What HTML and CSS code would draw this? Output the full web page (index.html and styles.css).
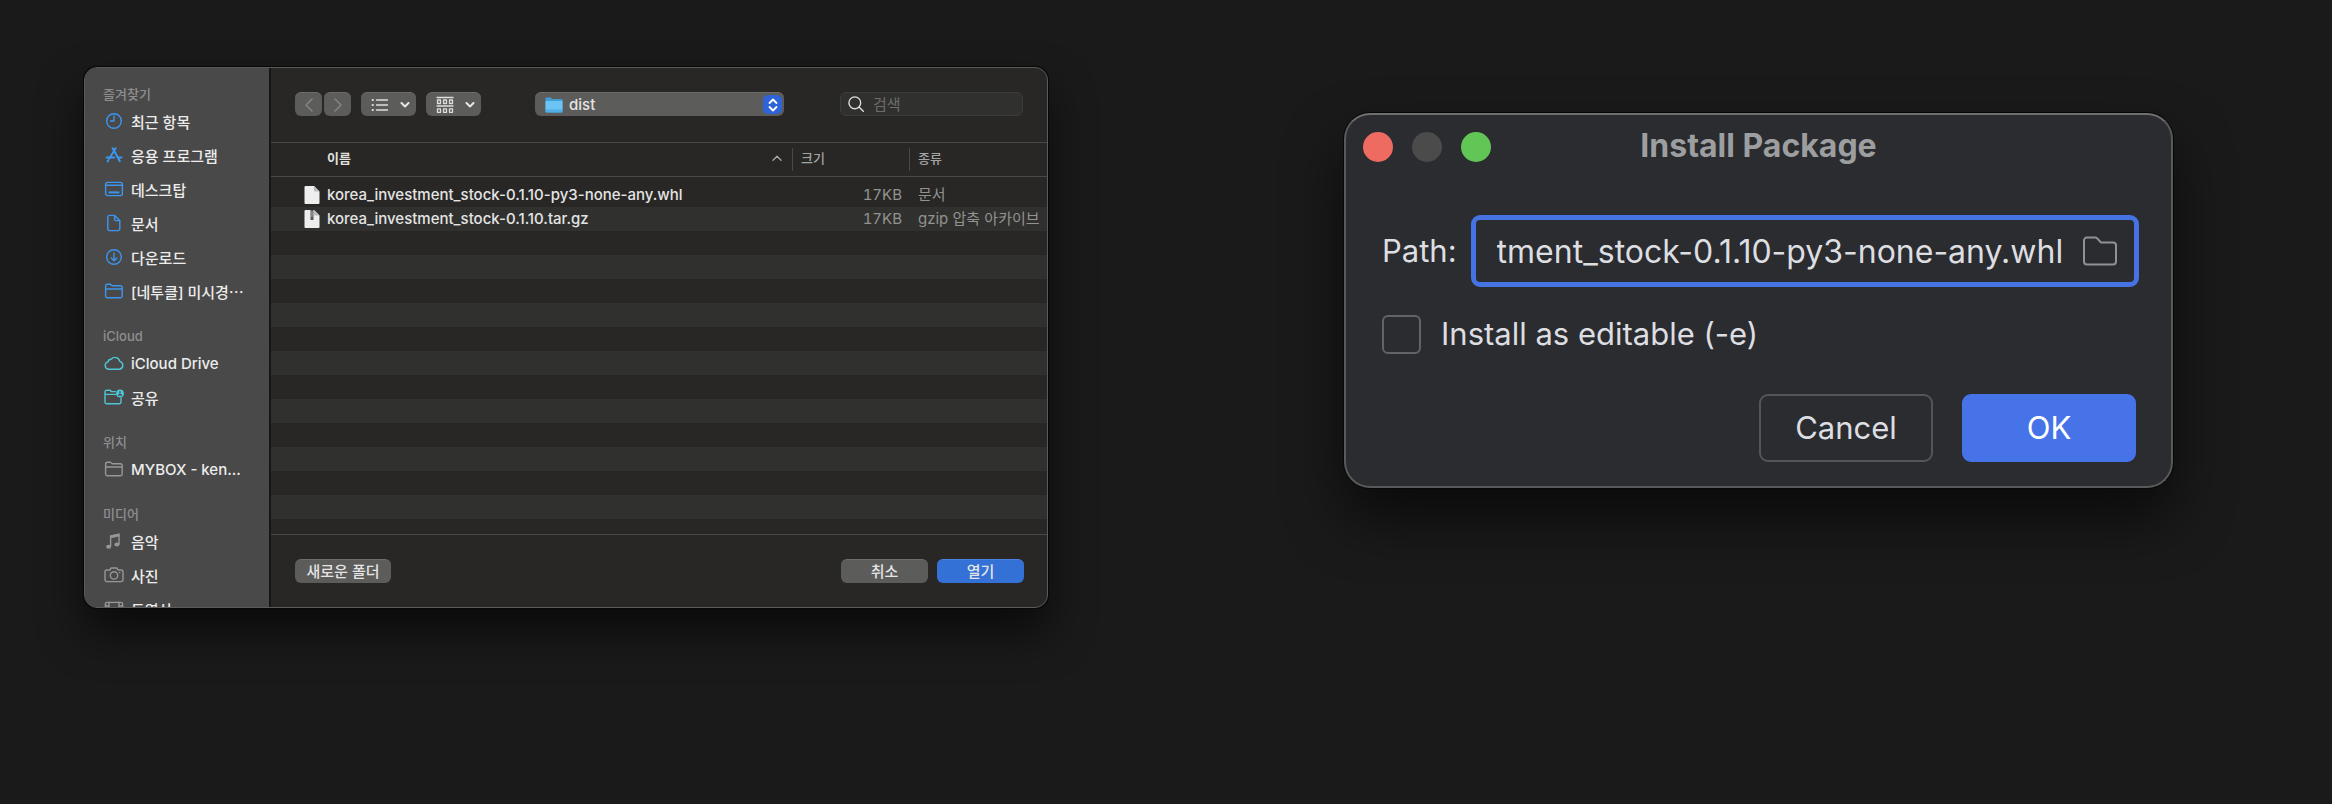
FILE: index.html
```html
<!DOCTYPE html>
<html lang="ko">
<head>
<meta charset="utf-8">
<title>Install Package</title>
<link rel="stylesheet" href="styles.css">
</head>
<body>
<main class="desktop">
  <section class="finder" aria-label="dist">
    <nav class="sidebar">
      <h2 class="side-title">즐겨찾기</h2>
      <ul class="side-list">
        <li><a class="side-item" href="#"><svg class="side-icon blue" viewBox="0 0 20 20"><circle cx="10" cy="10" r="7.3"/><path d="M10 5v5H6.4"/></svg>최근 항목</a></li>
        <li><a class="side-item" href="#"><svg class="side-icon blue thick" viewBox="0 0 20 20"><path d="M8.6 3.2 10 5.6M11.6 3.2 5.4 13.6M10 5.6l5.8 10.6M2.6 12.6h7.6M13.8 12.6h3.8M4.2 15.4l-.6 1"/></svg>응용 프로그램</a></li>
        <li><a class="side-item" href="#"><svg class="side-icon blue" viewBox="0 0 20 20"><rect x="1.6" y="3.4" width="16.8" height="13.2" rx="2"/><path d="M1.6 6.2h16.8"/><rect class="solid" x="4.6" y="12.4" width="10.8" height="2"/></svg>데스크탑</a></li>
        <li><a class="side-item" href="#"><svg class="side-icon blue" viewBox="0 0 20 20"><path d="M5.6 2.4h5l5.2 5.2v8.2a1.8 1.8 0 0 1-1.8 1.8H5.6a1.8 1.8 0 0 1-1.8-1.8V4.2a1.8 1.8 0 0 1 1.8-1.8zM10.6 2.6v3.6a1.4 1.4 0 0 0 1.4 1.4h3.8"/></svg>문서</a></li>
        <li><a class="side-item" href="#"><svg class="side-icon blue" viewBox="0 0 20 20"><circle cx="10" cy="10" r="7.3"/><path d="M10 6v7.6M7.2 11l2.8 2.8 2.8-2.8"/></svg>다운로드</a></li>
        <li><a class="side-item" href="#"><svg class="side-icon blue" viewBox="0 0 20 20"><path d="M1.6 15V5a1.8 1.8 0 0 1 1.8-1.8h3l1.8 1.6h8.2A1.8 1.8 0 0 1 18.2 6.6V15a1.8 1.8 0 0 1-1.8 1.8H3.4A1.8 1.8 0 0 1 1.6 15zM1.6 8h16.6"/></svg>[네투클] 미시경⋯</a></li>
      </ul>
      <h2 class="side-title">iCloud</h2>
      <ul class="side-list">
        <li><a class="side-item" href="#"><svg class="side-icon teal" viewBox="0 0 20 20"><path d="M4.6 16.2a3.7 3.7 0 0 1-.5-7.300 3 3 0 0 1 3-2.700 5 5 0 0 1 8.700 2.200 4 4 0 0 1-.2 7.800z"/></svg>iCloud Drive</a></li>
        <li><a class="side-item" href="#"><svg class="side-icon teal" viewBox="0 0 20 20"><path d="M11.4 4.6H7.6L6 3.2H2.8A1.8 1.8 0 0 0 1 5v10a1.8 1.8 0 0 0 1.8 1.8h12.4A1.8 1.8 0 0 0 17 15v-4M1 7.4h10.6"/><circle class="solid" cx="16" cy="6.4" r="3.900"/><path class="cut" d="M16 4.800v1M14.600 8.200q1.400-1.400 2.800 0"/></svg>공유</a></li>
      </ul>
      <h2 class="side-title">위치</h2>
      <ul class="side-list">
        <li><a class="side-item" href="#"><svg class="side-icon gray" viewBox="0 0 20 20"><path d="M1.6 15V5a1.8 1.8 0 0 1 1.8-1.8h3l1.8 1.6h8.2A1.8 1.8 0 0 1 18.2 6.6V15a1.8 1.8 0 0 1-1.8 1.8H3.4A1.8 1.8 0 0 1 1.6 15zM1.6 8h16.6"/></svg>MYBOX - ken...</a></li>
      </ul>
      <h2 class="side-title">미디어</h2>
      <ul class="side-list">
        <li><a class="side-item" href="#"><svg class="side-icon gray" viewBox="0 0 20 20"><path class="solid" d="M6 4.4 15.6 2.2v3L7.2 7.2H6z"/><path d="M6.600 5v10M15 4v9"/><ellipse class="solid" cx="4.600" cy="15.800" rx="2.500" ry="2"/><ellipse class="solid" cx="12.900" cy="13.600" rx="2.500" ry="2"/></svg>음악</a></li>
        <li><a class="side-item" href="#"><svg class="side-icon gray" viewBox="0 0 20 20"><path d="M2.800 5h3l1.400-2h5.600l1.400 2h3A1.800 1.800 0 0 1 19 6.800v8a1.800 1.800 0 0 1-1.800 1.800H2.800A1.800 1.800 0 0 1 1 14.800v-8A1.800 1.800 0 0 1 2.800 5z"/><circle cx="10" cy="10.400" r="3.700"/><circle class="solid" cx="15.800" cy="7.600" r=".8"/></svg>사진</a></li>
        <li><a class="side-item" href="#"><svg class="side-icon gray" viewBox="0 0 20 20"><rect x="1.400" y="3.400" width="17.200" height="13.200" rx="1.600"/><path d="M5 3.400v13.200M15 3.400v13.200M1.400 7H5M15 7h3.600M5 10h10"/></svg>동영상</a></li>
      </ul>
    </nav>

    <div class="browser">
      <header class="toolbar">
        <div class="nav-pair">
          <button class="mac-btn nav-btn" type="button" aria-label="뒤로"><svg class="chev" viewBox="0 0 10 14"><path d="M8 1 2 7l6 6"/></svg></button>
          <button class="mac-btn nav-btn" type="button" aria-label="앞으로"><svg class="chev" viewBox="0 0 10 14"><path d="m2 1 6 6-6 6"/></svg></button>
        </div>
        <button class="mac-btn view-btn" type="button" aria-label="목록 보기">
          <svg class="view-icon" viewBox="0 0 18 14"><path d="M5.500 2h11M5.500 7h11M5.500 12h11"/><path class="dots" d="M1.500 2h.5M1.500 7h.5M1.500 12h.5"/></svg>
          <svg class="caret" viewBox="0 0 10 6"><path d="m1.500 1 3.500 3.500L8.500 1"/></svg>
        </button>
        <button class="mac-btn view-btn" type="button" aria-label="그룹">
          <svg class="group-icon" viewBox="0 0 18 18"><path d="M1 1.500h16M1 10h16"/><g><rect x="1.500" y="4" width="3" height="3.500"/><rect x="7.500" y="4" width="3" height="3.500"/><rect x="13.500" y="4" width="3" height="3.500"/><rect x="1.500" y="12.800" width="3" height="3.500"/><rect x="7.500" y="12.800" width="3" height="3.500"/><rect x="13.500" y="12.800" width="3" height="3.500"/></g></svg>
          <svg class="caret" viewBox="0 0 10 6"><path d="m1.500 1 3.500 3.500L8.500 1"/></svg>
        </button>
        <div class="location">
          <svg class="loc-folder" viewBox="0 0 18 16"><path fill="#3f9fd6" d="M.5 1.500A1 1 0 0 1 1.500.5h4.300l1.400 1.500h9.300a1 1 0 0 1 1 1v11.500a1 1 0 0 1-1 1h-15a1 1 0 0 1-1-1z"/><path fill="#6cc4f5" d="M.5 4h17v8.800H.5z"/><path fill="#52aee6" d="M.5 12.800h17v1.700a1 1 0 0 1-1 1h-15a1 1 0 0 1-1-1z"/></svg>
          <select class="loc-select" aria-label="위치"><option>dist</option></select>
          <span class="stepper"><svg class="step-icon" viewBox="0 0 10 14"><path d="M1.500 5 5 1.500 8.500 5M1.500 9 5 12.500 8.500 9"/></svg></span>
        </div>
        <label class="search">
          <svg class="search-icon" viewBox="0 0 16 16"><circle cx="6.800" cy="6.800" r="5.900"/><path d="m11 11 4.300 4.300"/></svg>
          <input class="search-input" type="search" placeholder="검색" aria-label="검색">
        </label>
      </header>

      <div class="files">
        <table class="file-table">
          <colgroup><col><col class="col-size"><col class="col-kind"></colgroup>
          <thead>
            <tr>
              <th class="name-head" scope="col"><div class="head-cell">이름<svg class="sort" viewBox="0 0 10 6"><path d="M1 5.200 5 1.200l4 4"/></svg></div></th>
              <th scope="col"><div class="head-cell">크기</div></th>
              <th scope="col"><div class="head-cell">종류</div></th>
            </tr>
          </thead>
          <tbody>
            <tr>
              <td><div class="name-cell"><svg class="file-icon" viewBox="0 0 16 18"><path fill="#eee" d="M.5 1A1 1 0 0 1 1.500 0H10l5.500 5.500V17a1 1 0 0 1-1 1h-13a1 1 0 0 1-1-1z"/><path fill="#bcbcbc" d="M10 0v4.500a1 1 0 0 0 1 1h4.500z"/></svg>korea_investment_stock-0.1.10-py3-none-any.whl</div></td>
              <td class="size">17KB</td>
              <td class="kind">문서</td>
            </tr>
            <tr>
              <td><div class="name-cell"><svg class="file-icon" viewBox="0 0 16 18"><path fill="#eee" d="M.5 1A1 1 0 0 1 1.500 0H10l5.500 5.500V17a1 1 0 0 1-1 1h-13a1 1 0 0 1-1-1z"/><path fill="#bcbcbc" d="M10 0v4.500a1 1 0 0 0 1 1h4.500z"/><path fill="#555" d="M6.500 0h3v10h-3z"/><path stroke="#bbb" d="M7 2h1.500M7.500 4H9M7 6h1.500"/></svg>korea_investment_stock-0.1.10.tar.gz</div></td>
              <td class="size">17KB</td>
              <td class="kind">gzip 압축 아카이브</td>
            </tr>
          </tbody>
        </table>
        <div class="stripes"></div>
      </div>

      <footer class="actions">
        <button class="mac-btn new-folder" type="button">새로운 폴더</button>
        <button class="mac-btn act" type="button">취소</button>
        <button class="mac-btn act primary" type="button">열기</button>
      </footer>
    </div>
  </section>

  <form class="dialog" aria-label="Install Package">
    <header class="titlebar">
      <div class="lights"><span class="light red"></span><span class="light off"></span><span class="light green"></span></div>
      <h1 class="dialog-title">Install Package</h1>
    </header>
    <div class="path-row">
      <label for="path">Path:</label>
      <div class="path-field">
        <input class="path-input" id="path" type="text" value="tment_stock-0.1.10-py3-none-any.whl">
        <button class="browse" type="button" aria-label="Browse"><svg class="browse-icon" viewBox="0 0 34 30"><path d="M1 4.500A3 3 0 0 1 4 1.500h8.500a2 2 0 0 1 1.400.6L18 6.500h12a3 3 0 0 1 3 3V25.500a3 3 0 0 1-3 3H4a3 3 0 0 1-3-3z"/></svg></button>
      </div>
    </div>
    <div class="check-row">
      <input class="check" id="editable" type="checkbox">
      <label for="editable">Install as editable (-e)</label>
    </div>
    <div class="dialog-actions">
      <button class="jb-btn" type="button">Cancel</button>
      <button class="jb-btn ok" type="submit">OK</button>
    </div>
  </form>
</main>
</body>
</html>
```
FILE: styles.css
```css
* { box-sizing: border-box; }

body {
  margin: 0;
  background: #1a1a1a;
  color: #e4e4e4;
  font-family: Inter, "Noto Sans CJK KR", sans-serif;
  font-size: 15px;
}

button, input, select { font: inherit; color: inherit; margin: 0; }
svg { display: block; flex: none; fill: none; stroke-linecap: round; stroke-linejoin: round; }

.desktop {
  display: grid;
  grid-template-columns: minmax(0, 964fr) minmax(0, 829fr);
  align-items: start;
  gap: 296px;
  min-height: 100vh;
  padding: 67px 159px 0 84px;
}

/* File chooser */
.finder {
  display: flex;
  height: 541px;
  border: 1px solid #5b5b5a;
  border-radius: 13px;
  overflow: hidden;
  background: #282725;
  box-shadow: 0 0 0 1px #070707, 0 24px 44px rgba(0, 0, 0, .6);
}

.sidebar {
  flex: none;
  width: 186px;
  padding: 16px 12px 0 18px;
  background: #494949;
  border-right: 2px solid #161616;
  overflow: hidden;
}
.side-title {
  margin: 0;
  font-size: 13px;
  line-height: 20px;
  font-weight: 500;
  color: #8f8f8f;
}
.side-list { list-style: none; margin: 0 0 18px; padding: 0; }
.side-item {
  display: flex;
  align-items: center;
  gap: 7px;
  height: 34px;
  padding-left: 1px;
  color: #ececec;
  font-weight: 500;
  text-decoration: none;
  white-space: nowrap;
}
.side-icon { width: 20px; height: 20px; stroke: currentColor; stroke-width: 1.4; }
.side-icon.thick { stroke-width: 2; }
.blue { color: #3c96ee; }
.teal { color: #4fc6d8; }
.gray { color: #979797; }
.solid { fill: currentColor; stroke: none; }
.cut { stroke: #494949; }

.browser { flex: 1; min-width: 0; display: flex; flex-direction: column; }

.toolbar {
  display: flex;
  align-items: center;
  gap: 10px;
  height: 75px;
  padding: 0 24px 2px;
  border-bottom: 1px solid #484846;
}
.mac-btn {
  flex: none;
  display: flex;
  align-items: center;
  justify-content: center;
  height: 24px;
  padding: 0;
  border: 0;
  border-top: 1px solid #6c6c6b;
  border-radius: 6px;
  background: #5c5c5b;
  color: #e4e4e4;
  font-weight: 500;
  line-height: 20px;
  white-space: nowrap;
}
.nav-pair { display: flex; gap: 2px; }
.nav-btn { width: 27px; }
.chev { width: 10px; height: 14px; stroke: #858584; stroke-width: 1.5; }
.view-btn { width: 55px; gap: 11px; padding-left: 4px; }
.view-icon { width: 18px; height: 14px; stroke: #dedede; stroke-width: 1.3; }
.dots { stroke-width: 1.8; }
.group-icon { width: 18px; height: 18px; stroke: #dedede; stroke-width: 1.3; }
.caret { width: 10px; height: 6px; stroke: #e6e6e6; stroke-width: 2; }

.location {
  flex: 0 1 249px;
  min-width: 0;
  display: flex;
  align-items: center;
  height: 24px;
  margin-left: 44px;
  padding: 0 2px 0 10px;
  border-top: 1px solid #6c6c6b;
  border-radius: 6px;
  background: #5c5c5b;
}
.loc-folder { width: 18px; height: 16px; }
.loc-select {
  flex: 1;
  min-width: 0;
  height: 22px;
  padding: 0 6px;
  border: 0;
  background: none;
  appearance: none;
  font-weight: 500;
}
.stepper {
  display: flex;
  align-items: center;
  justify-content: center;
  width: 19px;
  height: 19px;
  border-radius: 5px;
  background: #2f64d8;
}
.step-icon { width: 10px; height: 14px; stroke: #fff; stroke-width: 1.8; }

.search {
  flex: 0 1 183px;
  min-width: 0;
  display: flex;
  align-items: center;
  gap: 9px;
  height: 24px;
  margin-left: auto;
  padding: 0 7px;
  border: 1px solid #3d3d3c;
  border-radius: 6px;
  background: #30302f;
}
.search-icon { width: 16px; height: 16px; stroke: #dcdcdc; stroke-width: 1.4; }
.search-input {
  flex: 1;
  min-width: 0;
  height: 22px;
  padding: 0;
  border: 0;
  outline: 0;
  background: none;
  appearance: none;
}
.search-input::placeholder { color: #6d6d6c; opacity: 1; }

.files { flex: 1; min-height: 0; display: flex; flex-direction: column; }
.file-table { width: 100%; table-layout: fixed; border-collapse: collapse; }
.col-size { width: 117px; }
.col-kind { width: 138px; }
.file-table th {
  height: 33px;
  padding: 0;
  border-bottom: 1px solid #484846;
  font-size: 13px;
  font-weight: 500;
  color: #a3a3a2;
  text-align: left;
}
.head-cell {
  display: flex;
  align-items: center;
  justify-content: space-between;
  height: 23px;
  padding: 0 0 2px 8px;
  border-left: 1px solid #484846;
  line-height: 20px;
}
.file-table .name-head { font-weight: 700; color: #e0e0df; }
.name-head .head-cell { border-left: 0; padding: 0 10px 2px 56px; }
.sort { width: 10px; height: 6px; stroke: #a8a8a7; stroke-width: 1.3; }

.file-table td { height: 24px; padding: 0; line-height: 24px; white-space: nowrap; }
.file-table tbody::before { content: ""; display: table-row; height: 7px; }
.name-cell { display: flex; align-items: center; gap: 7px; padding-left: 33px; font-weight: 500; }
.file-icon { width: 16px; height: 18px; }
.file-table .size { padding-right: 7px; text-align: right; color: #929291; font-variant-numeric: tabular-nums; }
.file-table .kind { padding-left: 9px; color: #929291; }
.file-table tbody tr:nth-child(even) { background: #30302e; }
.stripes {
  flex: 1;
  background: repeating-linear-gradient(#282725 0 24px, #30302e 24px 48px);
}

.actions {
  display: flex;
  gap: 9px;
  height: 73px;
  padding: 24px 23px 0 24px;
  border-top: 1px solid #484846;
}
.new-folder { width: 96px; margin-right: auto; }
.act { width: 87px; }
.primary { background: #3471d6; border-top-color: #4a83de; }

/* Install dialog */
.dialog {
  margin-top: 46px;
  padding: 0 35px 24px 36px;
  border: 2px solid #59595b;
  border-top-color: #6f6f70;
  border-radius: 26px;
  background: #2b2c2f;
  color: #dddee2;
  font-size: 31px;
  line-height: 40px;
  box-shadow: 0 0 0 1px #070707, 0 30px 56px rgba(0, 0, 0, .6);
}
.titlebar {
  display: grid;
  grid-template-columns: 1fr auto 1fr;
  align-items: center;
  height: 64px;
  margin: 0 -18px 0 -19px;
}
.lights { display: flex; gap: 19px; }
.light { width: 30px; height: 30px; border-radius: 50%; }
.red { background: #ed6b60; }
.off { background: #4b4b4c; }
.green { background: #61c655; }
.dialog-title { margin: 0; padding-bottom: 2px; font-size: 32px; line-height: 40px; font-weight: 700; color: #9d9ea0; }

.path-row { display: flex; align-items: center; gap: 14px; margin-top: 36px; }
.path-field {
  flex: 1;
  min-width: 0;
  display: flex;
  align-items: center;
  height: 72px;
  margin-right: -3px;
  padding: 0 17px 0 21px;
  border: 5px solid #4673e3;
  border-radius: 9px;
}
.path-input {
  flex: 1;
  min-width: 0;
  height: 56px;
  padding: 0;
  border: 0;
  outline: 0;
  background: none;
  font-size: 32px;
}
.browse { padding: 0; border: 0; background: none; }
.browse-icon { width: 34px; height: 30px; stroke: #909194; stroke-width: 2; }

.check-row { display: flex; align-items: center; gap: 20px; margin-top: 27px; }
.check {
  appearance: none;
  width: 39px;
  height: 39px;
  border: 2px solid #626366;
  border-radius: 6px;
}

.dialog-actions { display: flex; justify-content: flex-end; gap: 29px; margin-top: 40px; }
.jb-btn {
  width: 174px;
  height: 68px;
  padding: 0;
  border: 2px solid #545558;
  border-radius: 9px;
  background: none;
}
.ok { border-color: #4673e8; background: #4673e8; color: #fff; }
```
